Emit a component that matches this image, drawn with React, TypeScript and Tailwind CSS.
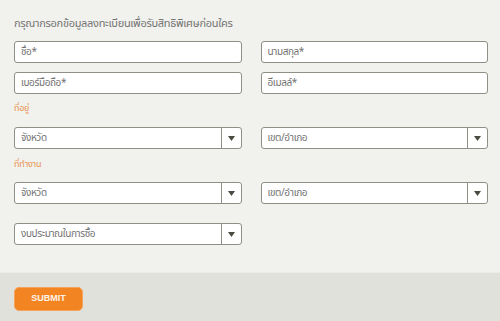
import React from 'react';

const font = { fontFamily: '"Noto Sans Thai", "Noto Sans", "Liberation Sans", sans-serif' };

function TextBox({ placeholder }: { placeholder: string }) {
  return (
    <div className="h-[22px] rounded-[3px] border border-[#8f8f86] bg-white px-[6px] flex items-center text-[10px] tracking-[-0.4px] text-[#727272]">
      {placeholder}
    </div>
  );
}

function SelectBox({ label }: { label: string }) {
  return (
    <div className="h-[22px] rounded-[3px] border border-[#8f8f86] bg-white flex items-stretch text-[10px] tracking-[-0.4px] text-[#727272]">
      <div className="flex-1 flex items-center px-[6px]">{label}</div>
      <div className="w-[20px] border-l border-[#8f8f86] flex items-center justify-center">
        <svg width="7" height="5" viewBox="0 0 7 5">
          <path d="M0 0 H7 L3.5 5 Z" fill="#4b4b42" />
        </svg>
      </div>
    </div>
  );
}

export default function App() {
  return (
    <div className="w-[500px] h-[321px] bg-[#f1f1ed] flex flex-col" style={font}>
      <div className="pl-[14px] pr-[12px] pb-[27px]">
        <div className="mt-[17px] text-[11px] leading-[14px] tracking-[-0.3px] text-[#747474]">
          กรุณากรอกข้อมูลลงทะเบียนเพื่อรับสิทธิพิเศษก่อนใคร
        </div>

        <div className="mt-[10px] grid grid-cols-2 gap-x-[19px] gap-y-[9px]">
          <TextBox placeholder="ชื่อ*" />
          <TextBox placeholder="นามสกุล*" />
          <TextBox placeholder="เบอร์มือถือ*" />
          <TextBox placeholder="อีเมลล์*" />
        </div>

        <div className="mt-[8px] text-[9px] leading-[12px] tracking-[-0.3px] text-[#e8914f]">ที่อยู่</div>
        <div className="mt-[13px] grid grid-cols-2 gap-x-[19px]">
          <SelectBox label="จังหวัด" />
          <SelectBox label="เขต/อำเภอ" />
        </div>

        <div className="mt-[9px] text-[9px] leading-[12px] tracking-[-0.3px] text-[#e8914f]">ที่ทำงาน</div>
        <div className="mt-[12px] grid grid-cols-2 gap-x-[19px]">
          <SelectBox label="จังหวัด" />
          <SelectBox label="เขต/อำเภอ" />
        </div>

        <div className="mt-[19px] grid grid-cols-2 gap-x-[19px]">
          <SelectBox label="งบประมาณในการซื้อ" />
        </div>
      </div>

      <div className="flex-1 bg-[#e1e1dc] border-t border-[#ebebe7] pl-[14px] pt-[14px]">
        <button
          className="w-[69px] h-[24px] rounded-[5px] bg-[#f28522] border border-[#f5a35c] text-[#fff3ea] text-[9px] font-bold flex items-center justify-center"
          style={{ fontFamily: '"Liberation Sans", sans-serif' }}
        >
          SUBMIT
        </button>
      </div>
    </div>
  );
}
